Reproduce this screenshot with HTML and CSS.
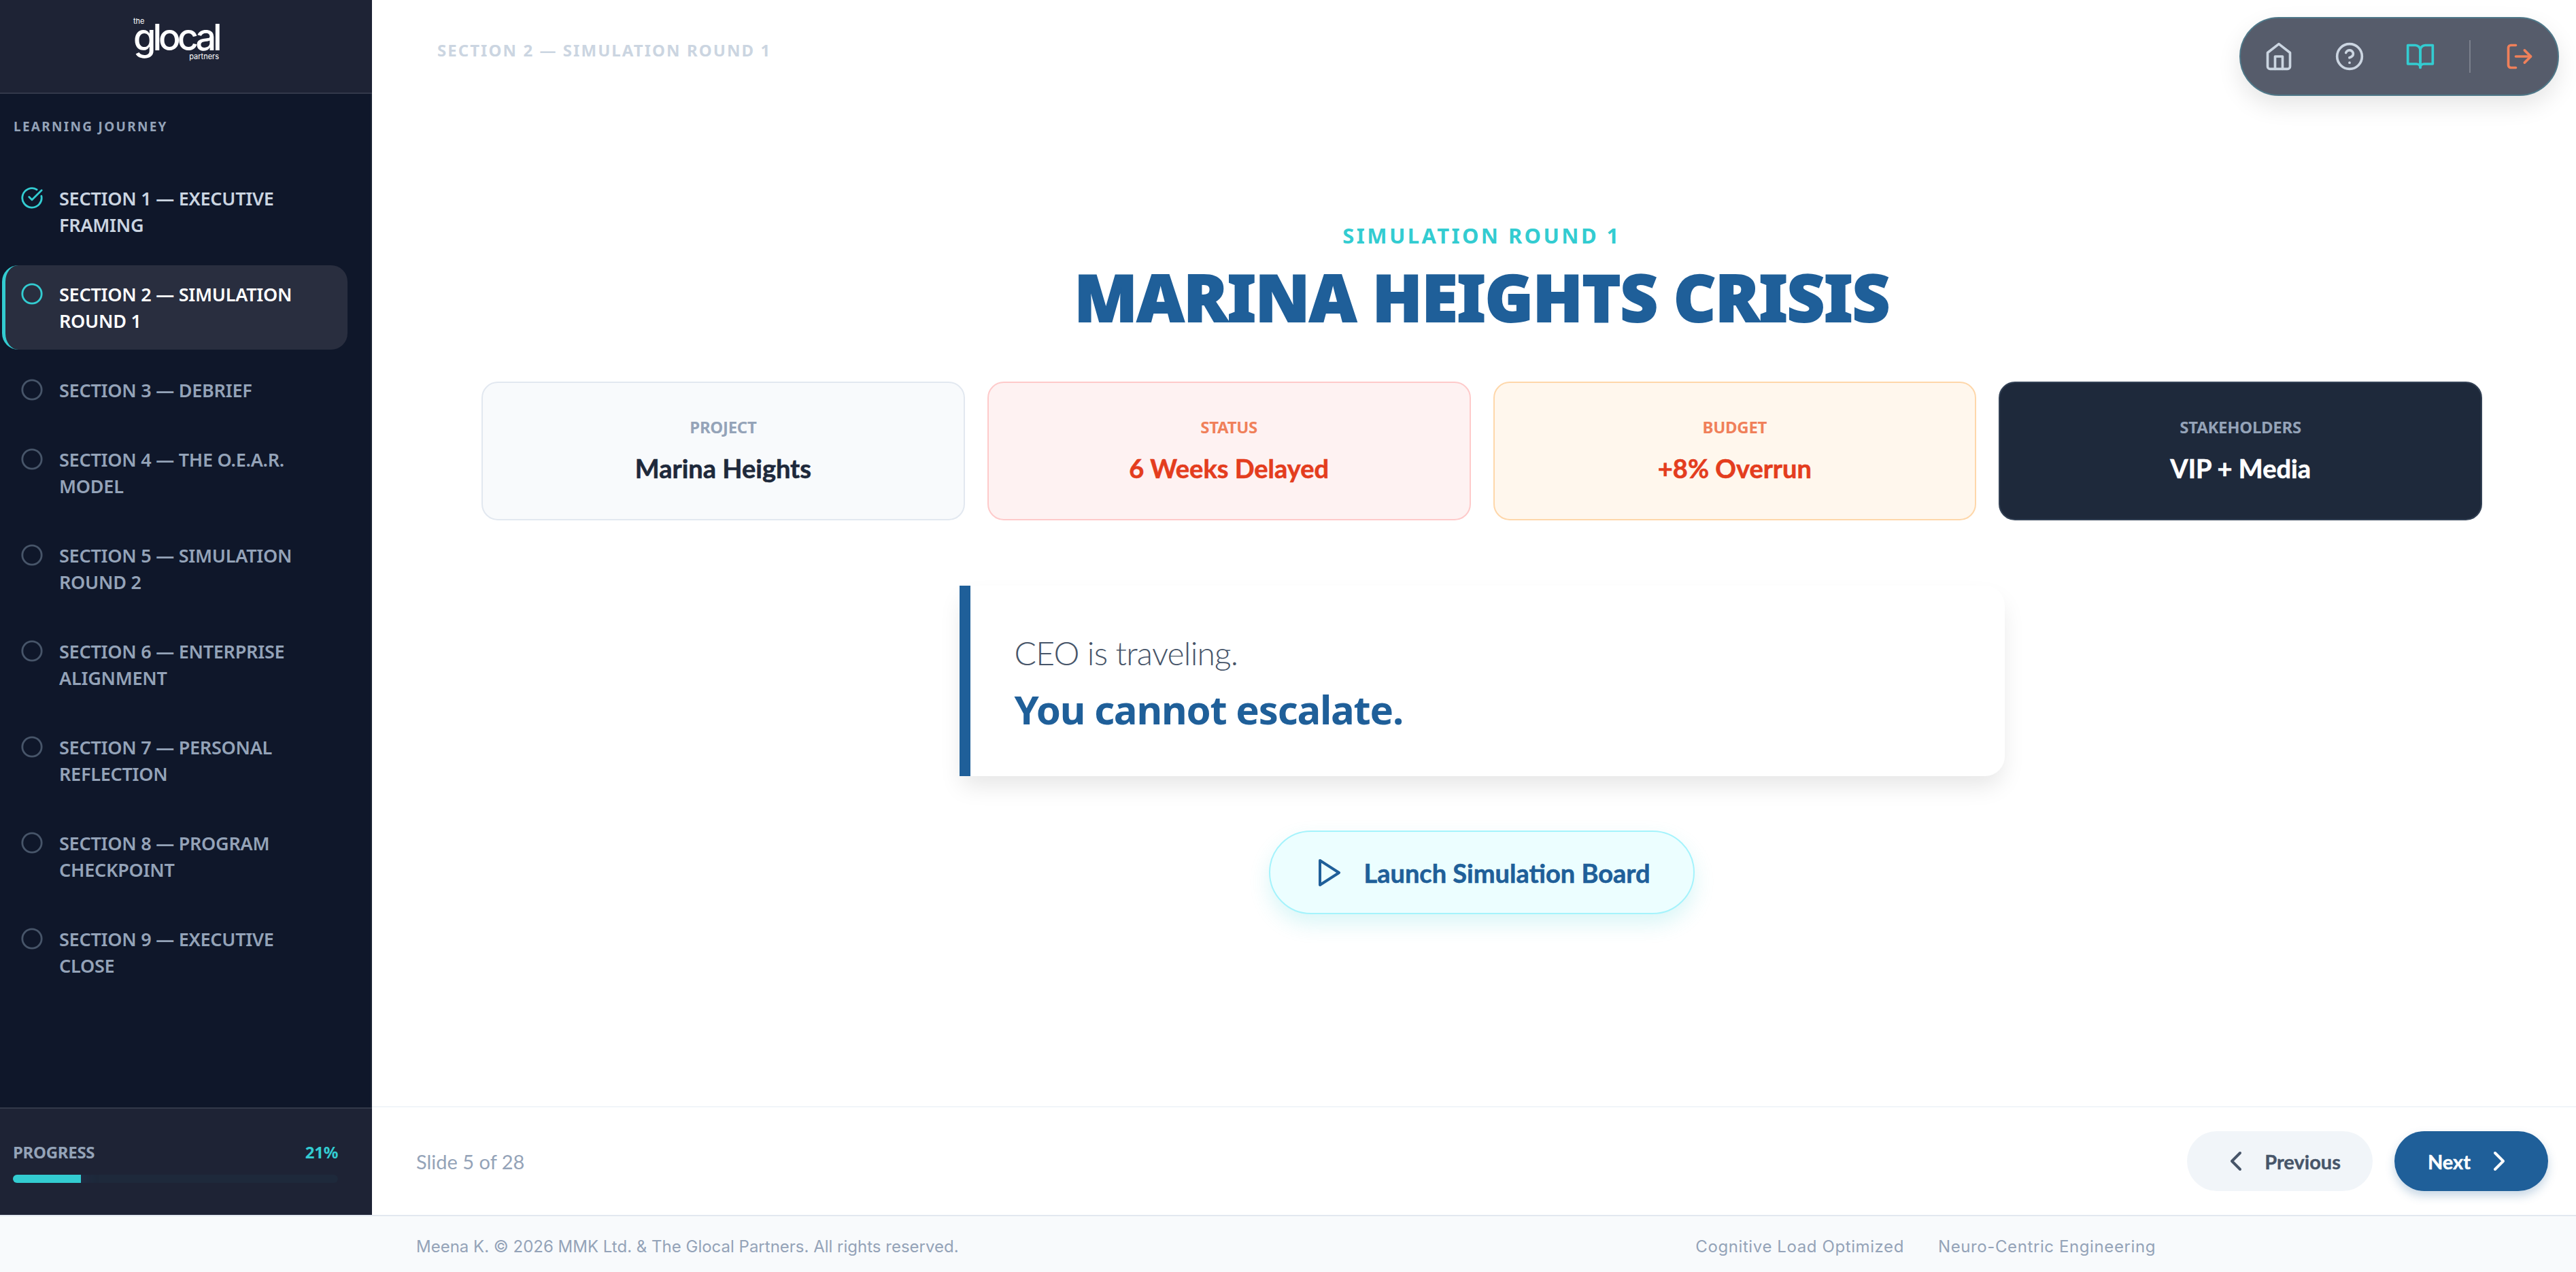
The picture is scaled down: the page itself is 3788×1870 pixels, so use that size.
FILE: index.html

```html
<!DOCTYPE html>
<html lang="en">

<head>
    <meta charset="UTF-8">
    <meta name="viewport" content="width=device-width, initial-scale=1.0">
    <title>Marina Heights Crisis</title>

    <link rel="stylesheet" href="styles.css">
</head>

<body>
    <div class="app">
        <aside class="sidebar">
            <div class="sidebar-head">
                <div class="logo">
                    <span class="logo-the">the</span>
                    <span class="logo-name">glocal</span>
                    <span class="logo-partners">partners</span>
                </div>
            </div>

            <div class="sidebar-body">
                <p class="journey-title">LEARNING JOURNEY</p>
                <ul class="journey-list">
                    <li class="journey-item done">
                        <svg class="journey-icon" viewBox="0 0 24 24"><path d="M21.8 10A10 10 0 1 1 17 3.3"/><path d="m9 11 3 3L22 4"/></svg>
                        <span>SECTION 1 — EXECUTIVE FRAMING</span>
                    </li>
                    <li class="journey-item active">
                        <svg class="journey-icon" viewBox="0 0 24 24"><circle cx="12" cy="12" r="10"/></svg>
                        <span>SECTION 2 — SIMULATION ROUND 1</span>
                    </li>
                    <li class="journey-item">
                        <svg class="journey-icon" viewBox="0 0 24 24"><circle cx="12" cy="12" r="10"/></svg>
                        <span>SECTION 3 — DEBRIEF</span>
                    </li>
                    <li class="journey-item">
                        <svg class="journey-icon" viewBox="0 0 24 24"><circle cx="12" cy="12" r="10"/></svg>
                        <span>SECTION 4 — THE O.E.A.R. MODEL</span>
                    </li>
                    <li class="journey-item">
                        <svg class="journey-icon" viewBox="0 0 24 24"><circle cx="12" cy="12" r="10"/></svg>
                        <span>SECTION 5 — SIMULATION ROUND 2</span>
                    </li>
                    <li class="journey-item">
                        <svg class="journey-icon" viewBox="0 0 24 24"><circle cx="12" cy="12" r="10"/></svg>
                        <span>SECTION 6 — ENTERPRISE ALIGNMENT</span>
                    </li>
                    <li class="journey-item">
                        <svg class="journey-icon" viewBox="0 0 24 24"><circle cx="12" cy="12" r="10"/></svg>
                        <span>SECTION 7 — PERSONAL REFLECTION</span>
                    </li>
                    <li class="journey-item">
                        <svg class="journey-icon" viewBox="0 0 24 24"><circle cx="12" cy="12" r="10"/></svg>
                        <span>SECTION 8 — PROGRAM CHECKPOINT</span>
                    </li>
                    <li class="journey-item">
                        <svg class="journey-icon" viewBox="0 0 24 24"><circle cx="12" cy="12" r="10"/></svg>
                        <span>SECTION 9 — EXECUTIVE CLOSE</span>
                    </li>
                </ul>
            </div>

            <div class="sidebar-foot">
                <div class="progress-row">
                    <span>PROGRESS</span>
                    <span class="progress-value">21%</span>
                </div>
                <div class="progress-track">
                    <div class="progress-fill" style="width: 21%"></div>
                </div>
            </div>
        </aside>

        <main class="main">
            <div class="toolbar">
                <svg class="tool-icon" viewBox="0 0 24 24"><path d="m3 9 9-7 9 7v11a2 2 0 0 1-2 2H5a2 2 0 0 1-2-2z"/><path d="M9 22V12h6v10"/></svg>
                <svg class="tool-icon" viewBox="0 0 24 24"><circle cx="12" cy="12" r="10"/><path d="M9.09 9a3 3 0 0 1 5.83 1c0 2-3 3-3 3"/><path d="M12 17h.01"/></svg>
                <svg class="tool-icon teal" viewBox="0 0 24 24"><path d="M2 3h6a4 4 0 0 1 4 4v14a3 3 0 0 0-3-3H2z"/><path d="M22 3h-6a4 4 0 0 0-4 4v14a3 3 0 0 1 3-3h7z"/></svg>
                <div class="tool-divider"></div>
                <svg class="tool-icon coral" viewBox="0 0 24 24"><path d="M9 21H5a2 2 0 0 1-2-2V5a2 2 0 0 1 2-2h4"/><path d="m16 17 5-5-5-5"/><path d="M21 12H9"/></svg>
            </div>

            <div class="topbar">SECTION 2 — SIMULATION ROUND 1</div>

            <section class="slide">
                <p class="eyebrow">SIMULATION ROUND 1</p>
                <h1 class="slide-title">MARINA HEIGHTS CRISIS</h1>

                <div class="cards">
                    <div class="card">
                        <span class="card-label">PROJECT</span>
                        <span class="card-value">Marina Heights</span>
                    </div>
                    <div class="card card-red">
                        <span class="card-label">STATUS</span>
                        <span class="card-value">6 Weeks Delayed</span>
                    </div>
                    <div class="card card-orange">
                        <span class="card-label">BUDGET</span>
                        <span class="card-value">+8% Overrun</span>
                    </div>
                    <div class="card card-dark">
                        <span class="card-label">STAKEHOLDERS</span>
                        <span class="card-value">VIP + Media</span>
                    </div>
                </div>

                <div class="callout">
                    <p class="callout-light">CEO is traveling.</p>
                    <p class="callout-strong">You cannot escalate.</p>
                </div>

                <button class="launch-btn">
                    <svg class="btn-icon" viewBox="0 0 24 24"><path d="M5 3l14 9-14 9z"/></svg>
                    Launch Simulation Board
                </button>
            </section>

            <nav class="slide-nav">
                <span class="slide-count">Slide 5 of 28</span>
                <div class="nav-buttons">
                    <button class="nav-btn prev">
                        <svg class="btn-icon" viewBox="0 0 24 24"><path d="m15 18-6-6 6-6"/></svg>
                        Previous
                    </button>
                    <button class="nav-btn next">
                        Next
                        <svg class="btn-icon" viewBox="0 0 24 24"><path d="m9 18 6-6-6-6"/></svg>
                    </button>
                </div>
            </nav>
        </main>
    </div>

    <footer class="page-footer">
        <span>Meena K. © 2026 MMK Ltd. &amp; The Glocal Partners. All rights reserved.</span>
        <div class="footer-tags">
            <span>Cognitive Load Optimized</span>
            <span>Neuro-Centric Engineering</span>
        </div>
    </footer>
</body>

</html>
```

FILE: styles.css

```css
* {
    margin: 0;
    padding: 0;
    box-sizing: border-box;
}
body {
    height: 1870px;
    overflow: hidden;
    background-color: #fff;
    font-family: "Noto Sans", "Open Sans", sans-serif;
}
svg {
    fill: none;
    stroke: currentColor;
    stroke-width: 2;
    stroke-linecap: round;
    stroke-linejoin: round;
    flex-shrink: 0;
}
.app {
    display: flex;
    height: 1786px;
}

/* sidebar */
.sidebar {
    width: 547px;
    flex-shrink: 0;
    display: flex;
    flex-direction: column;
    background-color: #0f172a;
}
.sidebar-head {
    height: 138px;
    padding: 24px 0 0 196px;
    background-color: #1e2335;
    border-bottom: 2px solid #33394a;
}
.logo {
    width: 126px;
    display: flex;
    flex-direction: column;
    color: #fff;
    font-family: "Inter", sans-serif;
}
.logo-the {
    font-size: 11px;
    line-height: 14px;
}
.logo-name {
    margin-top: -8px;
    font-size: 54px;
    line-height: 50px;
    font-weight: 500;
    letter-spacing: -5px;
}
.logo-partners {
    align-self: flex-end;
    margin-top: -4px;
    font-size: 11px;
    line-height: 14px;
}
.sidebar-body {
    flex: 1;
    padding: 35px 34px 0 3px;
    border-right: 2px solid #1c2435;
}
.journey-title {
    margin: 0 0 50px 17px;
    font-size: 19px;
    line-height: 26px;
    font-weight: 700;
    letter-spacing: 2.3px;
    color: #94a3b8;
}
.journey-list {
    list-style: none;
    display: flex;
    flex-direction: column;
    gap: 17px;
}
.journey-item {
    display: flex;
    align-items: flex-start;
    gap: 23px;
    padding: 23px 36px 23px 22px;
    border-left: 5px solid transparent;
    border-radius: 24px;
    font-size: 27px;
    line-height: 39px;
    font-weight: 600;
    letter-spacing: -0.25px;
    color: #94a3b8;
}
.journey-icon {
    width: 34px;
    height: 34px;
    margin-top: 2px;
    color: #475569;
}
.journey-item.done {
    color: #cbd5e1;
}
.journey-item.done .journey-icon,
.journey-item.active .journey-icon {
    color: #33ccd1;
}
.journey-item.active {
    color: #fff;
    background-color: #292e3f;
    border-left-color: #33ccd1;
}
.sidebar-foot {
    height: 158px;
    padding: 48px 50px 0 19px;
    background-color: #1e2335;
    border-top: 2px solid #33394a;
}
.progress-row {
    display: flex;
    justify-content: space-between;
    font-size: 24px;
    line-height: 32px;
    font-weight: 700;
    letter-spacing: -0.3px;
    color: #94a3b8;
}
.progress-value {
    color: #33ccd1;
}
.progress-track {
    height: 12px;
    margin-top: 17px;
    border-radius: 6px;
    overflow: hidden;
    background-color: #1e293b;
}
.progress-fill {
    height: 100%;
    background-color: #33ccd1;
    box-shadow: 0 0 24px rgba(51, 65, 120, 0.7);
}

/* main */
.main {
    position: relative;
    flex: 1;
    display: flex;
    flex-direction: column;
}
.toolbar {
    position: absolute;
    top: 25px;
    right: 25px;
    width: 470px;
    height: 116px;
    display: flex;
    align-items: center;
    padding-left: 34px;
    border: 2px solid #4f7889;
    border-radius: 58px;
    background-color: #565c6b;
    color: #cbd5e1;
    box-shadow: 0 14px 34px rgba(0, 0, 0, 0.1);
}
.tool-icon {
    width: 44px;
    height: 44px;
    margin-right: 60px;
}
.tool-icon.teal {
    color: #33ccd1;
    margin-right: 50px;
}
.tool-icon.coral {
    color: #f0805a;
    margin-right: 0;
}
.tool-divider {
    width: 2px;
    height: 48px;
    margin-right: 50px;
    background-color: #7b808c;
}
.topbar {
    height: 106px;
    padding: 58px 0 0 96px;
    font-size: 24px;
    line-height: 32px;
    font-weight: 700;
    letter-spacing: 2.05px;
    color: #cbd5e1;
}
.slide {
    flex: 1;
    display: flex;
    flex-direction: column;
    align-items: center;
    padding: 220px 138px 0 161px;
}
.eyebrow {
    font-size: 31px;
    line-height: 40px;
    font-weight: 700;
    letter-spacing: 3.4px;
    color: #33ccd1;
}
.slide-title {
    margin: 12px 0 67px;
    font-size: 96px;
    line-height: 116px;
    font-weight: 900;
    letter-spacing: -0.9px;
    -webkit-text-stroke: 2px #1f5f99;
    color: #1f5f99;
}
.cards {
    width: 100%;
    display: grid;
    grid-template-columns: repeat(4, 1fr);
    gap: 33px;
}
.card {
    height: 204px;
    display: flex;
    flex-direction: column;
    align-items: center;
    justify-content: center;
    gap: 18px;
    border: 2px solid #e2e8f0;
    border-radius: 24px;
    background-color: #f8fafc;
}
.card-label {
    font-size: 24px;
    line-height: 32px;
    font-weight: 700;
    letter-spacing: -0.3px;
    color: #94a3b8;
}
.card-value {
    font-family: "Lato", sans-serif;
    font-size: 38px;
    line-height: 52px;
    font-weight: 700;
    -webkit-text-stroke: 0.6px currentColor;
    color: #1e293b;
}
.card-red {
    background-color: #fef2f2;
    border-color: #fecaca;
}
.card-orange {
    background-color: #fff7ed;
    border-color: #fed7aa;
}
.card-red .card-label,
.card-orange .card-label {
    color: #f0805a;
}
.card-red .card-value,
.card-orange .card-value {
    color: #e43d1e;
}
.card-dark {
    background-color: #1e293b;
    border-color: #334155;
}
.card-dark .card-value {
    color: #fff;
}
.callout {
    width: 1537px;
    height: 280px;
    margin-top: 96px;
    padding: 70px 0 0 65px;
    border-left: 16px solid #1f5f99;
    border-radius: 0 29px 29px 0;
    background-color: #fff;
    box-shadow: 0 18px 34px -4px rgba(0, 0, 0, 0.1);
}
.callout-light {
    font-family: "Lato", sans-serif;
    font-size: 48px;
    line-height: 58px;
    font-weight: 300;
    letter-spacing: -0.8px;
    color: #475569;
}
.callout-strong {
    margin-top: 19px;
    font-size: 58px;
    line-height: 70px;
    font-weight: 700;
    letter-spacing: -1.2px;
    color: #1f5f99;
}
.launch-btn {
    width: 626px;
    height: 123px;
    margin-top: 80px;
    display: flex;
    align-items: center;
    justify-content: center;
    gap: 26px;
    border: 2px solid #a5f3fc;
    border-radius: 62px;
    background-color: #ecfeff;
    font-family: "Lato", sans-serif;
    font-size: 38px;
    font-weight: 700;
    -webkit-text-stroke: 0.6px currentColor;
    color: #1f5f99;
    box-shadow: 0 14px 30px rgba(51, 204, 209, 0.18);
}
.btn-icon {
    width: 48px;
    height: 48px;
}
.slide-nav {
    height: 160px;
    display: flex;
    align-items: center;
    justify-content: space-between;
    padding: 0 41px 0 65px;
    border-top: 2px solid #f1f5f9;
}
.slide-count {
    font-family: "Lato", sans-serif;
    font-size: 29px;
    color: #94a3b8;
}
.nav-buttons {
    display: flex;
    gap: 32px;
}
.nav-btn {
    height: 88px;
    display: flex;
    align-items: center;
    gap: 18px;
    border: none;
    border-radius: 44px;
    font-family: "Lato", sans-serif;
    font-size: 29px;
    font-weight: 700;
    -webkit-text-stroke: 0.4px currentColor;
}
.nav-btn.prev {
    padding: 0 47px 0 48px;
    background-color: #f1f5f9;
    color: #475569;
}
.nav-btn.next {
    padding: 0 48px 0 49px;
    background-color: #1f5f99;
    color: #fff;
    box-shadow: 0 7px 14px rgba(31, 95, 153, 0.25);
}
.page-footer {
    height: 84px;
    display: flex;
    align-items: center;
    justify-content: space-between;
    padding: 6px 618px 0 612px;
    border-top: 2px solid #e2e8f0;
    background-color: #f8fafc;
    font-family: "Inter", sans-serif;
    font-size: 24px;
    color: #94a3b8;
}
.footer-tags {
    display: flex;
    gap: 50px;
    letter-spacing: 0.6px;
}
```
